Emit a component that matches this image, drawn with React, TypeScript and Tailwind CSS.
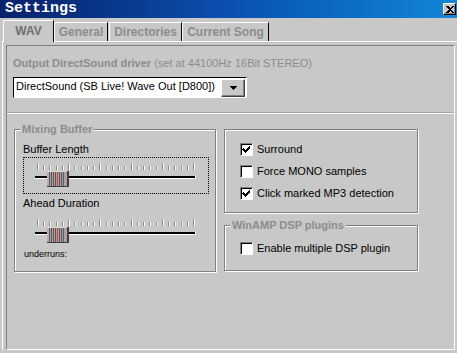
import React from "react";

const TICKS = Array.from({ length: 26 }, (_, i) => i);

function Slider() {
  return (
    <svg width="184" height="35" className="block" shapeRendering="crispEdges">
      {TICKS.map((i) => {
        const x = 13 + Math.round(i * 6.24);
        const long = i % 5 === 0;
        const y = long ? 5 : 8;
        const h = long ? 7 : 4;
        return (
          <g key={i}>
            <rect x={x} y={y} width={1} height={h} fill="#8a8a8a" />
            <rect x={x + 1} y={y} width={1} height={h} fill="#ffffff" />
          </g>
        );
      })}
      {/* track */}
      <rect x={11} y={18} width={160} height={2} fill="#000000" />
      <rect x={11} y={20} width={161} height={1} fill="#ffffff" />
      <rect x={171} y={18} width={1} height={3} fill="#ffffff" />
      {/* thumb */}
      <g>
        <rect x={23} y={13} width={22} height={16} fill="#5a5a5a" />
        {Array.from({ length: 11 }, (_, k) => (
          <rect key={k} x={24 + k * 2} y={14} width={1} height={14} fill="#a8a0a4" />
        ))}
        <rect x={23} y={13} width={2} height={15} fill="#c8a8b2" />
        <rect x={23} y={13} width={21} height={1} fill="#e4d4da" />
        <rect x={41} y={14} width={2} height={14} fill="#b898a2" />
        <rect x={43} y={13} width={2} height={16} fill="#404040" />
        <rect x={23} y={28} width={22} height={1} fill="#404040" />
        <rect x={33} y={14} width={1} height={14} fill="#ff3a10" />
      </g>
    </svg>
  );
}

function Check({ checked, label }: { checked: boolean; label: string }) {
  return (
    <div className="flex items-center h-[13px]">
      <div className="w-[13px] h-[13px] bg-white border border-t-[#808080] border-l-[#808080] border-r-white border-b-white shadow-[inset_1px_1px_0_#000] flex items-center justify-center shrink-0">
        {checked && (
          <svg width="11" height="11" viewBox="0 0 11 11" shapeRendering="crispEdges" className="block">
            <path d="M2 4h1v1h1v1h1v-1h1v-1h1v-1h1v-1h1v3h-1v1h-1v1h-1v1h-1v1h-1v-1h-1v-1h-1v-1h-1z" fill="#000" />
          </svg>
        )}
      </div>
      <span className="ml-[4px] text-[11px] leading-[13px] text-black whitespace-nowrap">{label}</span>
    </div>
  );
}

export default function App() {
  return (
    <div className="w-[457px] h-[353px] bg-[#c8c8c8] overflow-hidden font-['Liberation_Sans',Arial,sans-serif] select-none">
      {/* Title bar */}
      <div className="h-[18px] flex items-center justify-between pl-[5px] pr-[1px] bg-gradient-to-r from-[#08216b] via-[#0a50b0] to-[#1387d6]">
        <span className="font-['Liberation_Mono',monospace] font-bold text-[15px] leading-[18px] text-white tracking-[0px]">
          Settings
        </span>
        <div className="w-[13px] h-[12px] bg-[#c8c8c8] border border-t-white border-l-white border-r-black border-b-black shadow-[inset_-1px_-1px_0_#808080] flex items-center justify-center">
          <svg width="8" height="7" viewBox="0 0 8 7" shapeRendering="crispEdges" className="block">
            <path d="M0 0h2l2 2l2-2h2l-3 3.5l3 3.5h-2l-2-2l-2 2h-2l3-3.5z" fill="#000" />
          </svg>
        </div>
      </div>

      {/* Tabs */}
      <div className="h-[23px] flex items-end pl-[3px]">
        <div className="relative z-10 w-[51px] h-[22px] -mb-px bg-[#c8c8c8] border-l border-t border-white border-r border-r-black rounded-tl-[2px] flex items-center justify-center pb-[2px]">
          <span className="text-[12px] font-bold text-[#707070] leading-[14px]">WAV</span>
        </div>
        <div className="w-[54px] h-[19px] border-l border-t border-white border-r border-r-black rounded-tl-[2px] flex items-center justify-center">
          <span className="text-[12px] font-bold text-[#8c8c8c] leading-[14px]">General</span>
        </div>
        <div className="ml-[1px] w-[73px] h-[19px] border-l border-t border-white border-r border-r-black rounded-tl-[2px] flex items-center justify-center">
          <span className="text-[12px] font-bold text-[#8c8c8c] leading-[14px]">Directories</span>
        </div>
        <div className="w-[87px] h-[19px] border-l border-t border-white border-r border-r-black rounded-tl-[2px] flex items-center justify-center">
          <span className="text-[12px] font-bold text-[#8c8c8c] leading-[14px] whitespace-nowrap">Current Song</span>
        </div>
      </div>

      {/* Tab panel */}
      <div className="ml-[2px] border-t border-l border-white pl-[3px] pt-[3px]">
        <div className="w-[449px] h-[305px] border border-t-[#808080] border-l-[#808080] border-r-white border-b-white">
          <div className="pt-[11px] pl-[6px] text-[11px] leading-[13px] whitespace-nowrap">
            <span className="font-bold text-[#8c8c8c]">Output DirectSound driver</span>
            <span className="text-[#8c8c8c]"> (set at 44100Hz 16Bit STEREO)</span>
          </div>
          <div className="mt-[7px] ml-[6px] w-[234px] h-[21px] bg-white border border-t-black border-l-black border-r-white border-b-white flex">
            <div className="flex-1 pl-[2px] pt-[2px] text-[11px] leading-[13px] text-black whitespace-nowrap">
              DirectSound (SB Live! Wave Out [D800])
            </div>
            <div className="mt-[1px] mr-[1px] w-[24px] h-[18px] bg-[#c8c8c8] border border-t-white border-l-white border-r-[#404040] border-b-[#404040] shadow-[inset_-1px_-1px_0_#808080] flex items-center justify-center">
              <svg width="7" height="4" viewBox="0 0 7 4" shapeRendering="crispEdges" className="block">
                <path d="M0 0h7v1h-1v1h-1v1h-1v1h-1v-1h-1v-1h-1v-1h-1z" fill="#000" />
              </svg>
            </div>
          </div>

          {/* separator */}
          <div className="mt-[14px] h-[2px] border-t border-[#a4a4a4] border-b border-b-white" />

          {/* groups */}
          <div className="mt-[15px] ml-[7px] flex gap-[8px] items-start">
            {/* Mixing Buffer */}
            <div className="relative w-[202px] h-[143px] border border-[#808080] shadow-[inset_1px_1px_0_#fff,1px_1px_0_#fff]">
              <span className="absolute left-[5px] top-[-7px] px-[2px] bg-[#c8c8c8] text-[11px] leading-[13px] font-bold text-[#8c8c8c] whitespace-nowrap">
                Mixing Buffer
              </span>
              <div className="pt-[13px] pl-[8px] text-[11px] leading-[13px] text-black">Buffer Length</div>
              <div className="mt-[1px] ml-[8px] w-[186px] h-[37px] border border-dotted border-black">
                <Slider />
              </div>
              <div className="mt-[3px] pl-[8px] text-[11px] leading-[13px] text-black">Ahead Duration</div>
              <div className="mt-[4px] ml-[9px]">
                <Slider />
              </div>
              <div className="pl-[9px] text-[9px] leading-[11px] text-black">underruns:</div>
            </div>

            {/* right column */}
            <div className="flex flex-col gap-[12px]">
              <div className="w-[194px] h-[84px] border border-[#808080] shadow-[inset_1px_1px_0_#fff,1px_1px_0_#fff] pt-[13px] pl-[15px] flex flex-col gap-[9px]">
                <Check checked label="Surround" />
                <Check checked={false} label="Force MONO samples" />
                <Check checked label="Click marked MP3 detection" />
              </div>
              <div className="relative w-[194px] h-[46px] border border-[#808080] shadow-[inset_1px_1px_0_#fff,1px_1px_0_#fff] pt-[16px] pl-[15px]">
                <span className="absolute left-[5px] top-[-7px] px-[2px] bg-[#c8c8c8] text-[11px] leading-[13px] font-bold text-[#8c8c8c] whitespace-nowrap">
                  WinAMP DSP plugins
                </span>
                <Check checked={false} label="Enable multiple DSP plugin" />
              </div>
            </div>
          </div>
        </div>
      </div>
    </div>
  );
}
